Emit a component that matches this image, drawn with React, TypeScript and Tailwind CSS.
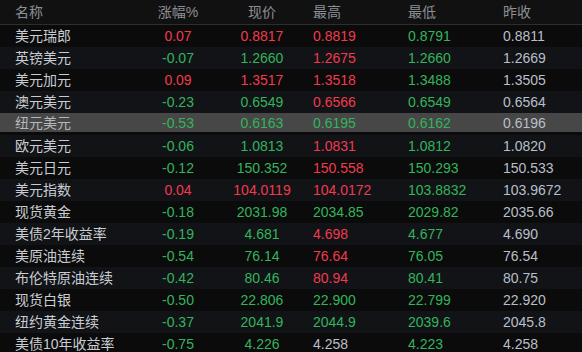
import React from 'react';

type Quote = {
  name: string;
  change: string;
  price: string;
  high: string;
  low: string;
  prev: string;
};

const quotes: Quote[] = [
  { name: '美元瑞郎', change: '0.07', price: '0.8817', high: '0.8819', low: '0.8791', prev: '0.8811' },
  { name: '英镑美元', change: '-0.07', price: '1.2660', high: '1.2675', low: '1.2660', prev: '1.2669' },
  { name: '美元加元', change: '0.09', price: '1.3517', high: '1.3518', low: '1.3488', prev: '1.3505' },
  { name: '澳元美元', change: '-0.23', price: '0.6549', high: '0.6566', low: '0.6549', prev: '0.6564' },
  { name: '纽元美元', change: '-0.53', price: '0.6163', high: '0.6195', low: '0.6162', prev: '0.6196' },
  { name: '欧元美元', change: '-0.06', price: '1.0813', high: '1.0831', low: '1.0812', prev: '1.0820' },
  { name: '美元日元', change: '-0.12', price: '150.352', high: '150.558', low: '150.293', prev: '150.533' },
  { name: '美元指数', change: '0.04', price: '104.0119', high: '104.0172', low: '103.8832', prev: '103.9672' },
  { name: '现货黄金', change: '-0.18', price: '2031.98', high: '2034.85', low: '2029.82', prev: '2035.66' },
  { name: '美债2年收益率', change: '-0.19', price: '4.681', high: '4.698', low: '4.677', prev: '4.690' },
  { name: '美原油连续', change: '-0.54', price: '76.14', high: '76.64', low: '76.05', prev: '76.54' },
  { name: '布伦特原油连续', change: '-0.42', price: '80.46', high: '80.94', low: '80.41', prev: '80.75' },
  { name: '现货白银', change: '-0.50', price: '22.806', high: '22.900', low: '22.799', prev: '22.920' },
  { name: '纽约黄金连续', change: '-0.37', price: '2041.9', high: '2044.9', low: '2039.6', prev: '2045.8' },
  { name: '美债10年收益率', change: '-0.75', price: '4.226', high: '4.258', low: '4.223', prev: '4.258' },
];

// red when above yesterday's close, green when below
const tone = (value: string, prev: string) => {
  const v = parseFloat(value);
  const p = parseFloat(prev);
  if (v > p) return 'text-[#f23a4e]';
  if (v < p) return 'text-[#33b45c]';
  return 'text-[#b9bfc8]';
};

const cols = 'grid grid-cols-[145px_66px_102px_95px_95px_1fr] items-center';

export default function App() {
  return (
    <div
      className="w-[582px] h-[352px] overflow-hidden bg-[#0b0b0b] text-[14px]"
      style={{ fontFamily: '"Liberation Sans", "Noto Sans CJK SC", sans-serif' }}
    >
      {/* Header */}
      <div className={`${cols} h-[25px] bg-[#111111] border-b border-[#2e2e2e] text-[#8c8f94]`}>
        <span className="pl-[15px]">名称</span>
        <span className="text-center">涨幅%</span>
        <span className="text-center">现价</span>
        <span>最高</span>
        <span>最低</span>
        <span>昨收</span>
      </div>

      {/* Rows */}
      {quotes.map((q, i) => {
        const selected = q.name === '纽元美元';
        const bg = selected
          ? 'bg-[#474747] border-b-[3px] border-b-[#0b0b0b]'
          : i % 2 === 1
            ? 'bg-[#111316]'
            : 'bg-[#0b0b0b]';
        return (
          <div key={q.name} className={`${cols} h-[22px] box-border ${bg}`}>
            <span className={`pl-[15px] whitespace-nowrap ${selected ? 'text-[#b4b7bc]' : 'text-[#c9cdd3]'}`}>
              {q.name}
            </span>
            <span className={`text-center ${q.change.startsWith('-') ? 'text-[#33b45c]' : 'text-[#f23a4e]'}`}>
              {q.change}
            </span>
            <span className={`text-center ${tone(q.price, q.prev)}`}>{q.price}</span>
            <span className={tone(q.high, q.prev)}>{q.high}</span>
            <span className={tone(q.low, q.prev)}>{q.low}</span>
            <span className="text-[#b9bfc8]">{q.prev}</span>
          </div>
        );
      })}
    </div>
  );
}
